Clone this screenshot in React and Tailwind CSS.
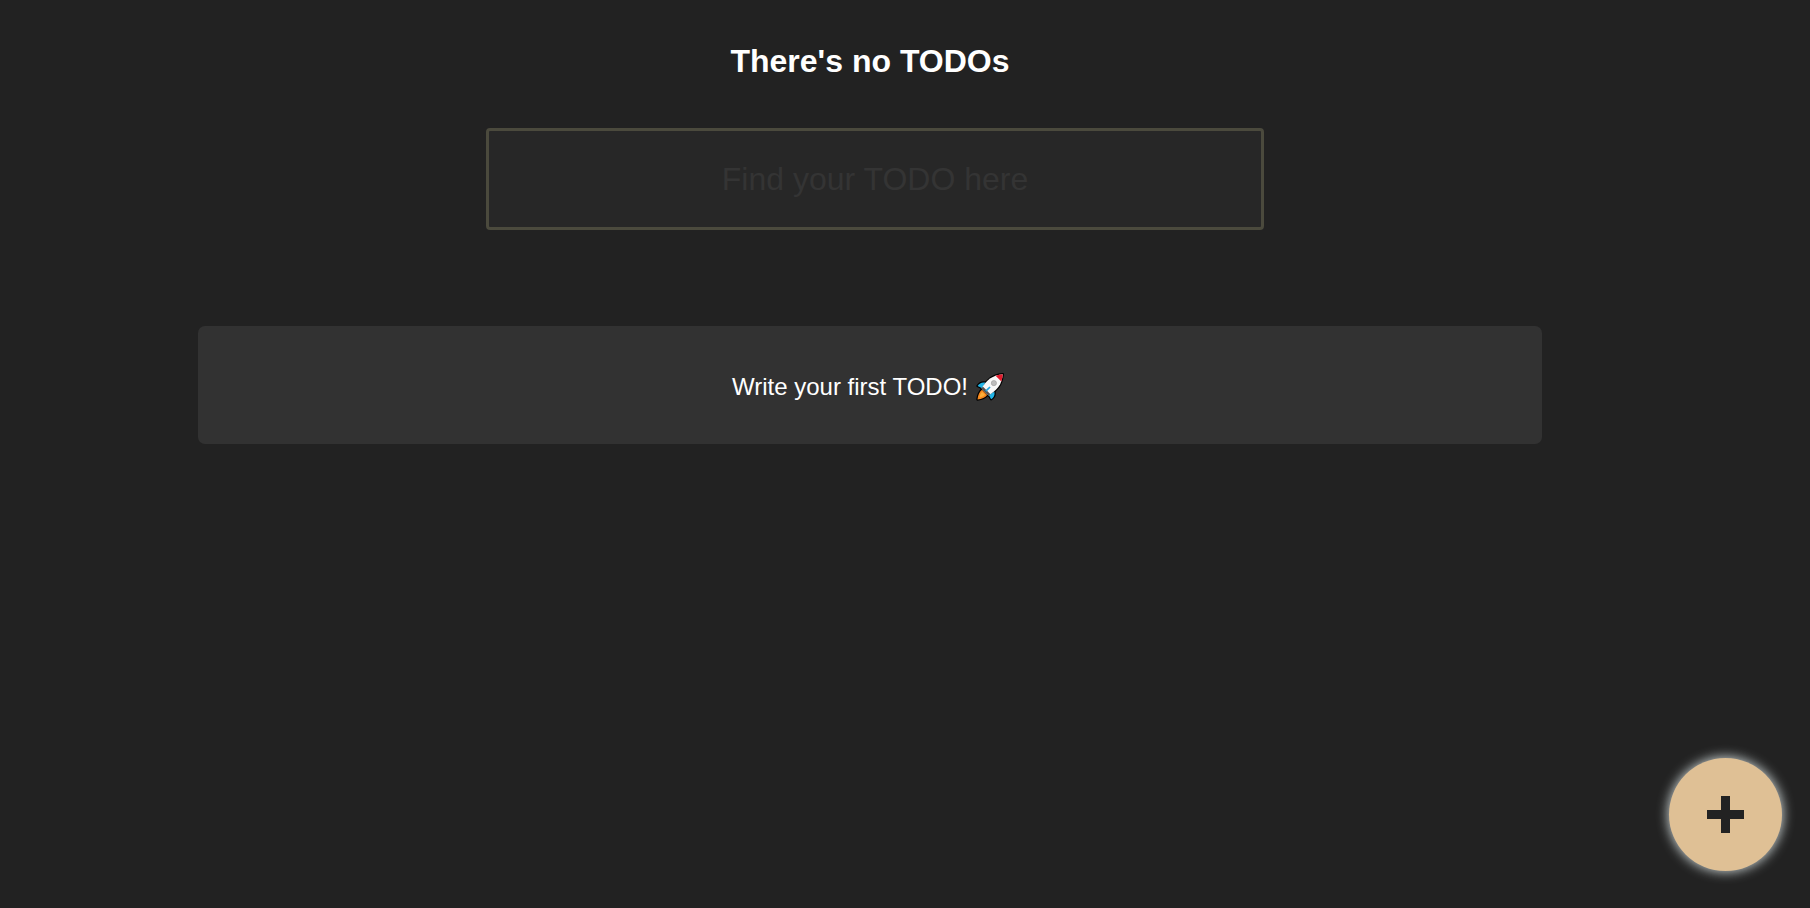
function Rocket() {
  return (
    <svg viewBox="0 0 28 28" className="h-7 w-7 shrink-0" role="img" aria-label="Rocket">
      <g stroke="#000" strokeWidth="2.4" strokeLinejoin="round">
        <path d="M9.300 9.600C5.800 8.900 3.400 10.200 1.600 12.900L6.200 15.200ZM18.400 18.700C19.100 22.200 17.800 24.600 15.100 26.200L12.700 21.800Z" fill="#22b4e6" />
        <path d="M6 16.800C3.400 18.800 2 22 1.500 26.500 6 26 9.200 24.600 11.200 22Z" fill="#f7891f" />
        <path d="M5.600 15.600C7.400 12 10.400 8.400 14 5.600 17.600 2.900 22 1.700 26.800 1.200 26.300 6 25.100 10.400 22.400 14 19.600 17.600 16 20.600 12.400 22.400Z" fill="#fff" />
      </g>
      <path d="M9.300 9.600C5.800 8.900 3.400 10.200 1.600 12.900L6.200 15.200ZM18.400 18.700C19.100 22.200 17.800 24.600 15.100 26.200L12.700 21.800Z" fill="#22b4e6" />
      <path d="M6 16.800C3.400 18.800 2 22 1.500 26.500 6 26 9.200 24.600 11.200 22Z" fill="#f7891f" />
      <path d="M6.200 19C4.700 20.300 3.900 22 3.500 24.500 6 24.100 7.700 23.200 9 21.800Z" fill="#fbb03b" />
      <path d="M5.600 15.600C7.400 12 10.400 8.400 14 5.600 17.600 2.900 22 1.700 26.800 1.200 26.300 6 25.100 10.400 22.400 14 19.600 17.600 16 20.600 12.400 22.400Z" fill="#f8f8f8" />
      <path d="M19.600 2.800C22 1.800 24.400 1.400 26.800 1.200 26.600 3.700 26.200 6.100 25.300 8.400Z" fill="#e31b2d" />
      <path d="M5.600 15.600 6.800 13.500 14.500 21.200 12.400 22.400Z" fill="#555" />
      <path d="M9.800 18.200 14 14" stroke="#22a4dc" strokeWidth="1.700" />
      <circle cx="17.900" cy="10.100" r="2.600" fill="#bdbdbd" stroke="#999" strokeWidth=".6" />
    </svg>
  );
}

export default function App() {
  return (
    <div className="min-h-screen bg-[#222222] font-['Liberation_Sans',Arial,sans-serif] text-white">
      <main className="flex flex-col items-center pt-[43px] pr-[70px]">
        <h1 className="text-[32px] leading-9 font-bold">There's no TODOs</h1>
        <div className="mt-[49px] w-full max-w-[788px] pl-2.5">
          <input
            type="text"
            aria-label="Find your TODO"
            placeholder="Find your TODO here"
            className="block h-[102px] w-full rounded-[4px] border-3 border-[#4b4a3d] bg-[#272727] px-6 text-center text-[32px] text-white outline-none placeholder:text-[#343434]"
          />
        </div>
        <section className="mt-24 flex w-full max-w-[1344px] items-center justify-center gap-2 rounded-[7px] bg-[#323232] pt-[47px] pr-7 pb-[43px] pl-6">
          <p className="text-[24px] leading-7">Write your first TODO!</p>
          <Rocket />
        </section>
      </main>
      <button
        type="button"
        aria-label="Create TODO"
        className="fixed right-7 bottom-[37px] flex h-[113px] w-[113px] items-center justify-center rounded-full bg-[#dfc095] text-[#222222] shadow-[0_0_12px_1px_#c8d0d0]"
      >
        <svg viewBox="0 0 37 37" className="h-[37px] w-[37px]" aria-hidden="true">
          <path d="M14 0h9v14h14v9H23v14h-9V23H0v-9h14z" fill="currentColor" />
        </svg>
      </button>
    </div>
  );
}
